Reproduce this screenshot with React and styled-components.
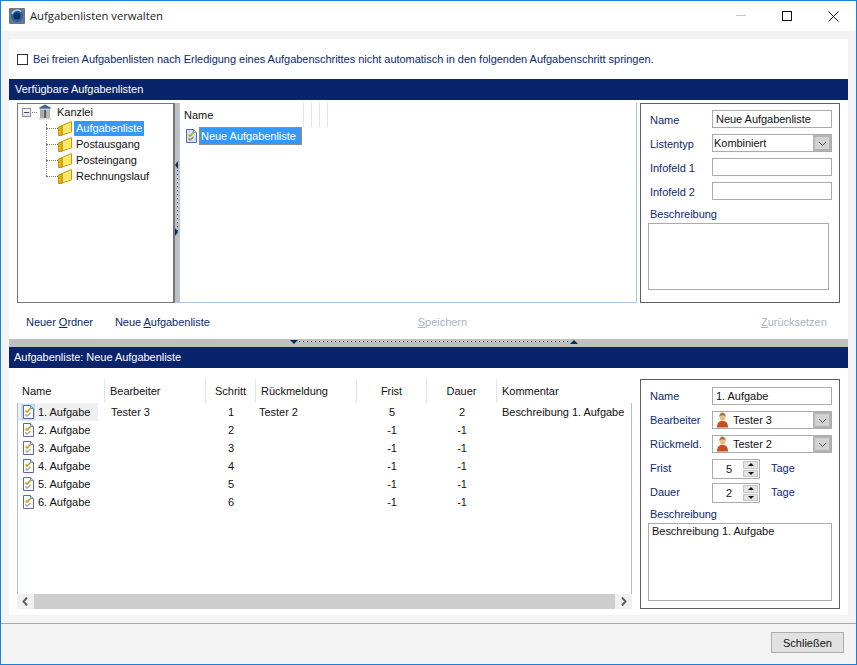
import React from "react";
import styled, { createGlobalStyle } from "styled-components";

const navy = "#09246a";
const labelBlue = "#0a2a6e";

const Global = createGlobalStyle`
  html, body { margin: 0; padding: 0; background: #f3f3f3; }
  * { box-sizing: border-box; }
`;

const Win = styled.div`
  width: 857px;
  height: 665px;
  border: 1px solid #1b7fd6;
  background: #f3f3f3;
  display: flex;
  flex-direction: column;
  font-family: "Liberation Sans", Arial, sans-serif;
  font-size: 11px;
  letter-spacing: -0.03px;
  color: #111;
  overflow: hidden;
`;
const TitleBar = styled.div`
  height: 30px;
  flex: none;
  background: #fff;
  display: flex;
  align-items: center;
  padding-left: 8px;
`;
const AppIcon = styled.svg`
  width: 16px;
  height: 16px;
  flex: none;
`;
const Title = styled.div`
  margin-left: 5px;
  margin-bottom: 2px;
  flex: 1;
  font-family: "Open Sans", sans-serif;
  font-size: 11.3px;
  color: #222;
`;
const WinButton = styled.div`
  width: 46px;
  height: 30px;
  display: flex;
  align-items: center;
  justify-content: center;
`;
const Content = styled.div`
  flex: none;
  height: 576px;
  margin: 8px 8px 0 8px;
  background: #fff;
  display: flex;
  flex-direction: column;
`;
const CheckRow = styled.label`
  height: 40px;
  flex: none;
  display: flex;
  align-items: center;
  padding-left: 8px;
  color: ${labelBlue};
`;
const Check = styled.span`
  width: 11px;
  height: 11px;
  border: 1px solid #333;
  margin-right: 5px;
  flex: none;
`;
const SectionBar = styled.div`
  height: 21px;
  flex: none;
  background: ${navy};
  color: #fff;
  display: flex;
  align-items: center;
  padding: 0 0 1px ${(p) => p.$pad}px;
`;
const TopSplit = styled.div`
  height: 203px;
  flex: none;
  display: flex;
  padding: 3px 8px 0 8px;
`;
const Tree = styled.div`
  width: 158px;
  flex: none;
  height: 200px;
  border: 1px solid #777;
  border-right-width: 2px;
  padding: 0 0 0 4px;
  position: relative;
`;
const TreeRow = styled.div`
  height: 16px;
  display: flex;
  align-items: center;
  padding-left: ${(p) => p.$indent}px;
`;
const Expander = styled.span`
  width: 9px;
  height: 9px;
  border: 1px solid #8a8f98;
  background: linear-gradient(#fff, #dde);
  margin-right: 1px;
  display: flex;
  align-items: center;
  justify-content: center;
  &::after {
    content: "";
    width: 5px;
    height: 1px;
    background: #445;
  }
`;
const DotH = styled.span`
  width: ${(p) => p.$w}px;
  height: 0;
  border-top: 1px dotted #777;
  flex: none;
`;
const TreeLineV = styled.span`
  position: absolute;
  left: 28px;
  top: 20px;
  height: 52px;
  border-left: 1px dotted #777;
`;
const TreeLabel = styled.span`
  margin-left: ${(p) => p.$ml || 2}px;
  padding: 0 2px;
  height: 15px;
  line-height: 15px;
  background: ${(p) => (p.$sel ? "#3399ff" : "transparent")};
  color: ${(p) => (p.$sel ? "#fff" : "#111")};
`;
const VSplitter = styled.div`
  width: 4px;
  flex: none;
  height: 200px;
  background: #c0c0c0;
  position: relative;
`;
const VDots = styled.span`
  position: absolute;
  left: 2px;
  top: 62px;
  height: 66px;
  width: 1px;
  background: repeating-linear-gradient(#fff 0 1px, #0a2a5c 1px 2px, #c0c0c0 2px 4px);
`;
const ArrowV = styled.span`
  position: absolute;
  left: 0;
  top: ${(p) => p.$top}px;
  width: 0;
  height: 0;
  border-top: 4px solid transparent;
  border-bottom: 4px solid transparent;
  ${(p) =>
    p.$dir === "left"
      ? "border-right: 3px solid #0a2a5c;"
      : "border-left: 3px solid #0a2a5c;"}
`;
const ListPane = styled.div`
  width: 458px;
  flex: none;
  height: 200px;
  border-right: 1px solid #a9c8e4;
  border-bottom: 1px solid #a9c8e4;
  border-left: 1px solid #a9c8e4;
  position: relative;
`;
const ListHead = styled.div`
  height: 24px;
  display: flex;
  align-items: center;
  padding-left: 4px;
`;
const HeadTicks = styled.span`
  position: absolute;
  top: 0;
  left: ${(p) => p.$left}px;
  width: 1px;
  height: 24px;
  background: #e4e4e4;
`;
const ListItem = styled.div`
  display: flex;
  align-items: center;
  height: 18px;
  padding-left: 5px;
`;
const SelText = styled.span`
  margin-left: 1px;
  width: 103px;
  height: 18px;
  line-height: 18px;
  padding-left: 2px;
  background: #3399ff;
  color: #fff;
  outline: 1px dotted #e0862a;
  outline-offset: -1px;
`;
const FormBox = styled.div`
  width: 200px;
  flex: none;
  height: ${(p) => p.$h}px;
  margin-left: ${(p) => p.$ml}px;
  border: 1px solid #5f5f5f;
  padding: ${(p) => p.$pt}px 7px 0 7px;
`;
const FormRow = styled.div`
  height: 24px;
  display: flex;
  align-items: flex-start;
  padding-left: 2px;
  color: ${labelBlue};
`;
const FieldLabel = styled.span`
  width: 62px;
  flex: none;
  padding-top: ${(p) => p.$top ?? 4}px;
`;
const Field = styled.div`
  width: 120px;
  flex: none;
  height: 18px;
  border: 1px solid #ababab;
  background: #fff;
  color: #111;
  display: flex;
  align-items: center;
  padding-left: 3px;
  position: relative;
`;
const Combo = styled(Field)`
  padding-left: 1px;
`;
const ComboBtn = styled.span`
  position: absolute;
  right: 0;
  top: 0;
  bottom: 0;
  width: 18px;
  background: #d2d2d2;
  border: 2px solid #b4b4b4;
  display: flex;
  align-items: center;
  justify-content: center;
`;
const Spin = styled.div`
  width: 48px;
  flex: none;
  height: 20px;
  border: 1px solid #ababab;
  color: #111;
  position: relative;
  display: flex;
  align-items: center;
  justify-content: flex-end;
  padding-right: 27px;
`;
const SpinBtns = styled.span`
  position: absolute;
  right: 1px;
  top: 1px;
  width: 15px;
  height: 16px;
  display: flex;
  flex-direction: column;
  gap: 1px;
`;
const SpinBtn = styled.span`
  flex: 1;
  background: #e4e4e4;
  border: 1px solid #c4c4c4;
  display: flex;
  align-items: center;
  justify-content: center;
  &::after {
    content: "";
    border-left: 3px solid transparent;
    border-right: 3px solid transparent;
    ${(p) => (p.$up ? "border-bottom: 3px solid #111;" : "border-top: 3px solid #111;")}
  }
`;
const Unit = styled.span`
  margin-left: 11px;
  padding-top: 3px;
`;
const DescLabel = styled.div`
  color: ${labelBlue};
  padding: ${(p) => p.$top}px 0 0 2px;
  height: ${(p) => p.$h}px;
`;
const DescBox = styled.div`
  width: ${(p) => p.$w}px;
  height: ${(p) => p.$h}px;
  border: 1px solid #ababab;
  padding: 1px 3px;
  color: #111;
`;
const ActionRow = styled.div`
  height: 36px;
  flex: none;
  display: flex;
  align-items: center;
  padding: 2px 0 0 17px;
`;
const Action = styled.span`
  color: ${(p) => (p.$off ? "#a9b4c6" : labelBlue)};
  margin-right: ${(p) => p.$mr || 0}px;
  margin-left: ${(p) => p.$ml || 0}px;
`;
const HSplitter = styled.div`
  height: 8px;
  flex: none;
  background: #c0c0c0;
  position: relative;
`;
const HDots = styled.span`
  position: absolute;
  left: 285px;
  width: 276px;
  top: 2px;
  height: 1px;
  background: repeating-linear-gradient(90deg, #fff 0 1px, #0a2a5c 1px 2px, #c0c0c0 2px 4px);
`;
const ArrowH = styled.span`
  position: absolute;
  left: ${(p) => p.$left}px;
  top: 1px;
  width: 0;
  height: 0;
  border-left: 4px solid transparent;
  border-right: 4px solid transparent;
  ${(p) =>
    p.$dir === "down"
      ? "border-top: 4px solid #0a2a5c;"
      : "border-bottom: 4px solid #0a2a5c;"}
`;
const BottomSplit = styled.div`
  flex: 1;
  display: flex;
  padding: 11px 8px 0 8px;
`;
const TableWrap = styled.div`
  width: 615px;
  flex: none;
  height: 230px;
  position: relative;
  display: flex;
  flex-direction: column;
`;
const TableGrid = styled.div`
  display: grid;
  grid-template-columns: 87px 101px 50px 101px 70px 70px 1fr;
  grid-auto-rows: 18px;
  flex: 1;
  align-content: start;
  border-left: 1px solid #a9c0d8;
  border-right: 1px solid #a9c0d8;
  margin-top: 24px;
`;
const HeadRow = styled.div`
  position: absolute;
  top: 0;
  left: 0;
  right: 0;
  height: 24px;
  display: grid;
  grid-template-columns: 88px 101px 50px 101px 70px 70px 1fr;
`;
const HeadCell = styled.div`
  display: flex;
  align-items: center;
  justify-content: ${(p) => (p.$center ? "center" : "flex-start")};
  padding-left: ${(p) => (p.$center ? 0 : 5)}px;
  border-right: ${(p) => (p.$last ? "none" : "1px solid #e4e4e4")};
`;
const NameCell = styled.div`
  display: flex;
  align-items: center;
  padding-left: 3px;
  background: ${(p) => (p.$sel ? "#f0f0f0" : "transparent")};
  margin-right: 7px;
`;
const IconWrap = styled.span`
  width: 14px;
  height: 16px;
  display: flex;
  align-items: center;
  justify-content: center;
  background: ${(p) => (p.$sel ? "#bcdcf6" : "transparent")};
  margin-right: 3px;
`;
const Cell = styled.div`
  display: flex;
  align-items: center;
  justify-content: ${(p) => (p.$center ? "center" : "flex-start")};
  padding-left: ${(p) => (p.$center ? 0 : p.$pad ?? 5)}px;
  white-space: nowrap;
`;
const Scrollbar = styled.div`
  height: 15px;
  flex: none;
  background: #f0f0f0;
  display: flex;
  align-items: center;
  justify-content: space-between;
`;
const ScrollThumb = styled.div`
  flex: 1;
  height: 15px;
  background: #cdcdcd;
`;
const ScrollBtn = styled.div`
  width: 17px;
  display: flex;
  align-items: center;
  justify-content: center;
`;
const Footer = styled.div`
  flex: 1;
  margin-top: 8px;
  border-top: 1px solid #a9a9a9;
  display: flex;
  justify-content: flex-end;
  align-items: flex-start;
  padding: 8px 12px 0 0;
`;
const CloseBtn = styled.button`
  width: 73px;
  height: 21px;
  border: 1px solid #adadad;
  background: #e1e1e1;
  font-family: "Liberation Sans", Arial, sans-serif;
  font-size: 11px;
  color: #111;
  padding: 0;
`;
const U = styled.span`
  text-decoration: underline;
`;

const DocIcon = ({ blue }) => (
  <svg width="13" height="14" viewBox="0 0 13 14">
    <path d="M1.5.5h7l3 3v10h-10z" fill={blue ? "#cfe3f5" : "#fdfdfd"} stroke="#5f68a4" />
    <path d="M8.5.5v3h3" fill="#bcd8ee" stroke="#5f9cc0" />
    <path d="M3.500 5.500l1.500 1.500 3.500-3.500" fill="none" stroke="#d0a010" strokeWidth="1.700" />
    <path d="M3.500 9.500l1.500 1.500 3.500-3" fill="none" stroke={blue ? "#7a9a40" : "#a8a8a8"} strokeWidth="1.500" />
  </svg>
);

const Folder = () => (
  <svg width="14" height="15" viewBox="0 0 14 15" style={{ flex: "none" }}>
    <path d="M4 4.500l9.500 -4v10.500l-9.500 3z" fill="#ffe96a" stroke="#c99a10" />
    <path d="M.5 6l3.500 -1.500v10l-3.500 0z" fill="#f0b400" stroke="#a07808" strokeWidth=".7" />
  </svg>
);

const Bank = () => (
  <svg width="16" height="16" viewBox="0 0 16 16" style={{ flex: "none" }}>
    <path d="M1.500 4l6.500 -3.500 6.500 3.500z" fill="#3f6290" />
    <rect x="2.500" y="4" width="11" height="1.500" fill="#7f93a8" />
    <rect x="3" y="6" width="3" height="8" fill="#a8a8a8" />
    <rect x="6.500" y="6" width="3" height="8" fill="#5f5f5f" />
    <rect x="10" y="6" width="3" height="8" fill="#b8b8b8" />
    <rect x="1.500" y="14" width="13" height="1.500" fill="#d4d4d4" />
  </svg>
);

const Person = () => (
  <svg width="13" height="16" viewBox="0 0 13 16" style={{ flex: "none", marginLeft: 2, marginRight: 4 }}>
    <path d="M1 15.500c0-5 2-6.500 5.500-6.500s5.500 1.500 5.500 6.500z" fill="#c9501c" />
    <ellipse cx="6.500" cy="5" rx="3" ry="3.800" fill="#efbd84" />
    <path d="M3.400 4.500c0-3 1.500-4 3.100-4s3.100 1 3.100 4c-1-1.500-5.200-1.500-6.200 0z" fill="#a87838" />
  </svg>
);

const Chevron = ({ dir }) => (
  <svg width="9" height="9" viewBox="0 0 9 9">
    {dir === "down" && <path d="M1 3l3.500 3.500L8 3" fill="none" stroke="#666" />}
    {dir === "left" && <path d="M6 .5L2.500 4.500 6 8.500" fill="none" stroke="#606060" strokeWidth="2" />}
    {dir === "right" && <path d="M3 .5l3.500 4L3 8.500" fill="none" stroke="#606060" strokeWidth="2" />}
  </svg>
);

const folders = ["Aufgabenliste", "Postausgang", "Posteingang", "Rechnungslauf"];
const steps = [1, 2, 3, 4, 5, 6];

const App = () => (
  <Win>
    <Global />
    <TitleBar>
      <AppIcon viewBox="0 0 16 16">
        <rect width="16" height="16" rx="1" fill="#6d7680" />
        <circle cx="8" cy="8" r="6" fill="#1565b0" />
        <circle cx="8" cy="8" r="3.500" fill="#0a2c5c" />
        <path d="M3 6a5.500 5.500 0 0 1 9-2.500" fill="none" stroke="#a8d4f4" strokeWidth="1.500" />
      </AppIcon>
      <Title>Aufgabenlisten verwalten</Title>
      <WinButton>
        <svg width="10" height="10" viewBox="0 0 10 10"><path d="M0 4.500h10" stroke="#c8c8c8" /></svg>
      </WinButton>
      <WinButton>
        <svg width="10" height="10" viewBox="0 0 10 10"><rect x=".5" y=".5" width="9" height="9" fill="none" stroke="#111" /></svg>
      </WinButton>
      <WinButton>
        <svg width="11" height="11" viewBox="0 0 11 11"><path d="M.5.500l10 10M10.500.500l-10 10" stroke="#111" /></svg>
      </WinButton>
    </TitleBar>
    <Content>
      <CheckRow>
        <Check />
        Bei freien Aufgabenlisten nach Erledigung eines Aufgabenschrittes nicht automatisch in den folgenden Aufgabenschritt springen.
      </CheckRow>
      <SectionBar $pad={6}>Verfügbare Aufgabenlisten</SectionBar>
      <TopSplit>
        <Tree>
          <TreeLineV />
          <TreeRow $indent={0}>
            <Expander />
            <DotH $w={5} />
            <Bank />
            <TreeLabel>Kanzlei</TreeLabel>
          </TreeRow>
          {folders.map((f, i) => (
            <TreeRow key={f} $indent={24}>
              <DotH $w={12} />
              <Folder />
              <TreeLabel $sel={i === 0} $ml={2}>{f}</TreeLabel>
            </TreeRow>
          ))}
        </Tree>
        <VSplitter>
          <VDots />
          <ArrowV $top={58} $dir="left" />
          <ArrowV $top={125} $dir="right" />
        </VSplitter>
        <ListPane>
          <ListHead>Name</ListHead>
          <HeadTicks $left={123} />
          <HeadTicks $left={131} />
          <HeadTicks $left={139} />
          <HeadTicks $left={147} />
          <ListItem>
            <DocIcon blue />
            <SelText>Neue Aufgabenliste</SelText>
          </ListItem>
        </ListPane>
        <FormBox $h={200} $ml={3} $pt={6}>
          <FormRow>
            <FieldLabel>Name</FieldLabel>
            <Field>Neue Aufgabenliste</Field>
          </FormRow>
          <FormRow>
            <FieldLabel>Listentyp</FieldLabel>
            <Combo>
              Kombiniert
              <ComboBtn><Chevron dir="down" /></ComboBtn>
            </Combo>
          </FormRow>
          <FormRow>
            <FieldLabel>Infofeld 1</FieldLabel>
            <Field />
          </FormRow>
          <FormRow>
            <FieldLabel>Infofeld 2</FieldLabel>
            <Field />
          </FormRow>
          <DescLabel $h={17} $top={2}>Beschreibung</DescLabel>
          <DescBox $w={181} $h={67} />
        </FormBox>
      </TopSplit>
      <ActionRow>
        <Action $mr={22}>Neuer <U>O</U>rdner</Action>
        <Action $mr={208}>Neue <U>A</U>ufgabenliste</Action>
        <Action $off><U>S</U>peichern</Action>
        <Action $off $ml={294}><U>Z</U>urücksetzen</Action>
      </ActionRow>
      <HSplitter>
        <HDots />
        <ArrowH $left={281} $dir="down" />
        <ArrowH $left={561} $dir="up" />
      </HSplitter>
      <SectionBar $pad={5}>Aufgabenliste: Neue Aufgabenliste</SectionBar>
      <BottomSplit>
        <TableWrap>
          <HeadRow>
            <HeadCell>Name</HeadCell>
            <HeadCell>Bearbeiter</HeadCell>
            <HeadCell $center>Schritt</HeadCell>
            <HeadCell>Rückmeldung</HeadCell>
            <HeadCell $center>Frist</HeadCell>
            <HeadCell $center>Dauer</HeadCell>
            <HeadCell $last>Kommentar</HeadCell>
          </HeadRow>
          <TableGrid>
            {steps.map((n) => (
              <React.Fragment key={n}>
                <NameCell $sel={n === 1}>
                  <IconWrap $sel={n === 1}><DocIcon /></IconWrap>
                  {n}. Aufgabe
                </NameCell>
                <Cell $pad={6}>{n === 1 ? "Tester 3" : ""}</Cell>
                <Cell $center>{n}</Cell>
                <Cell $pad={3}>{n === 1 ? "Tester 2" : ""}</Cell>
                <Cell $center>{n === 1 ? 5 : -1}</Cell>
                <Cell $center>{n === 1 ? 2 : -1}</Cell>
                <Cell>{n === 1 ? "Beschreibung 1. Aufgabe" : ""}</Cell>
              </React.Fragment>
            ))}
          </TableGrid>
          <Scrollbar>
            <ScrollBtn><Chevron dir="left" /></ScrollBtn>
            <ScrollThumb />
            <ScrollBtn><Chevron dir="right" /></ScrollBtn>
          </Scrollbar>
        </TableWrap>
        <FormBox $h={230} $ml={8} $pt={7}>
          <FormRow>
            <FieldLabel $top={3}>Name</FieldLabel>
            <Field>1. Aufgabe</Field>
          </FormRow>
          <FormRow>
            <FieldLabel $top={3}>Bearbeiter</FieldLabel>
            <Combo>
              <Person />Tester 3
              <ComboBtn><Chevron dir="down" /></ComboBtn>
            </Combo>
          </FormRow>
          <FormRow>
            <FieldLabel $top={3}>Rückmeld.</FieldLabel>
            <Combo>
              <Person />Tester 2
              <ComboBtn><Chevron dir="down" /></ComboBtn>
            </Combo>
          </FormRow>
          <FormRow>
            <FieldLabel $top={3}>Frist</FieldLabel>
            <Spin>5<SpinBtns><SpinBtn $up /><SpinBtn /></SpinBtns></Spin>
            <Unit>Tage</Unit>
          </FormRow>
          <FormRow>
            <FieldLabel $top={3}>Dauer</FieldLabel>
            <Spin>2<SpinBtns><SpinBtn $up /><SpinBtn /></SpinBtns></Spin>
            <Unit>Tage</Unit>
          </FormRow>
          <DescLabel $h={16} $top={1}>Beschreibung</DescLabel>
          <DescBox $w={184} $h={78}>Beschreibung 1. Aufgabe</DescBox>
        </FormBox>
      </BottomSplit>
    </Content>
    <Footer>
      <CloseBtn>Schließen</CloseBtn>
    </Footer>
  </Win>
);

export default App;
